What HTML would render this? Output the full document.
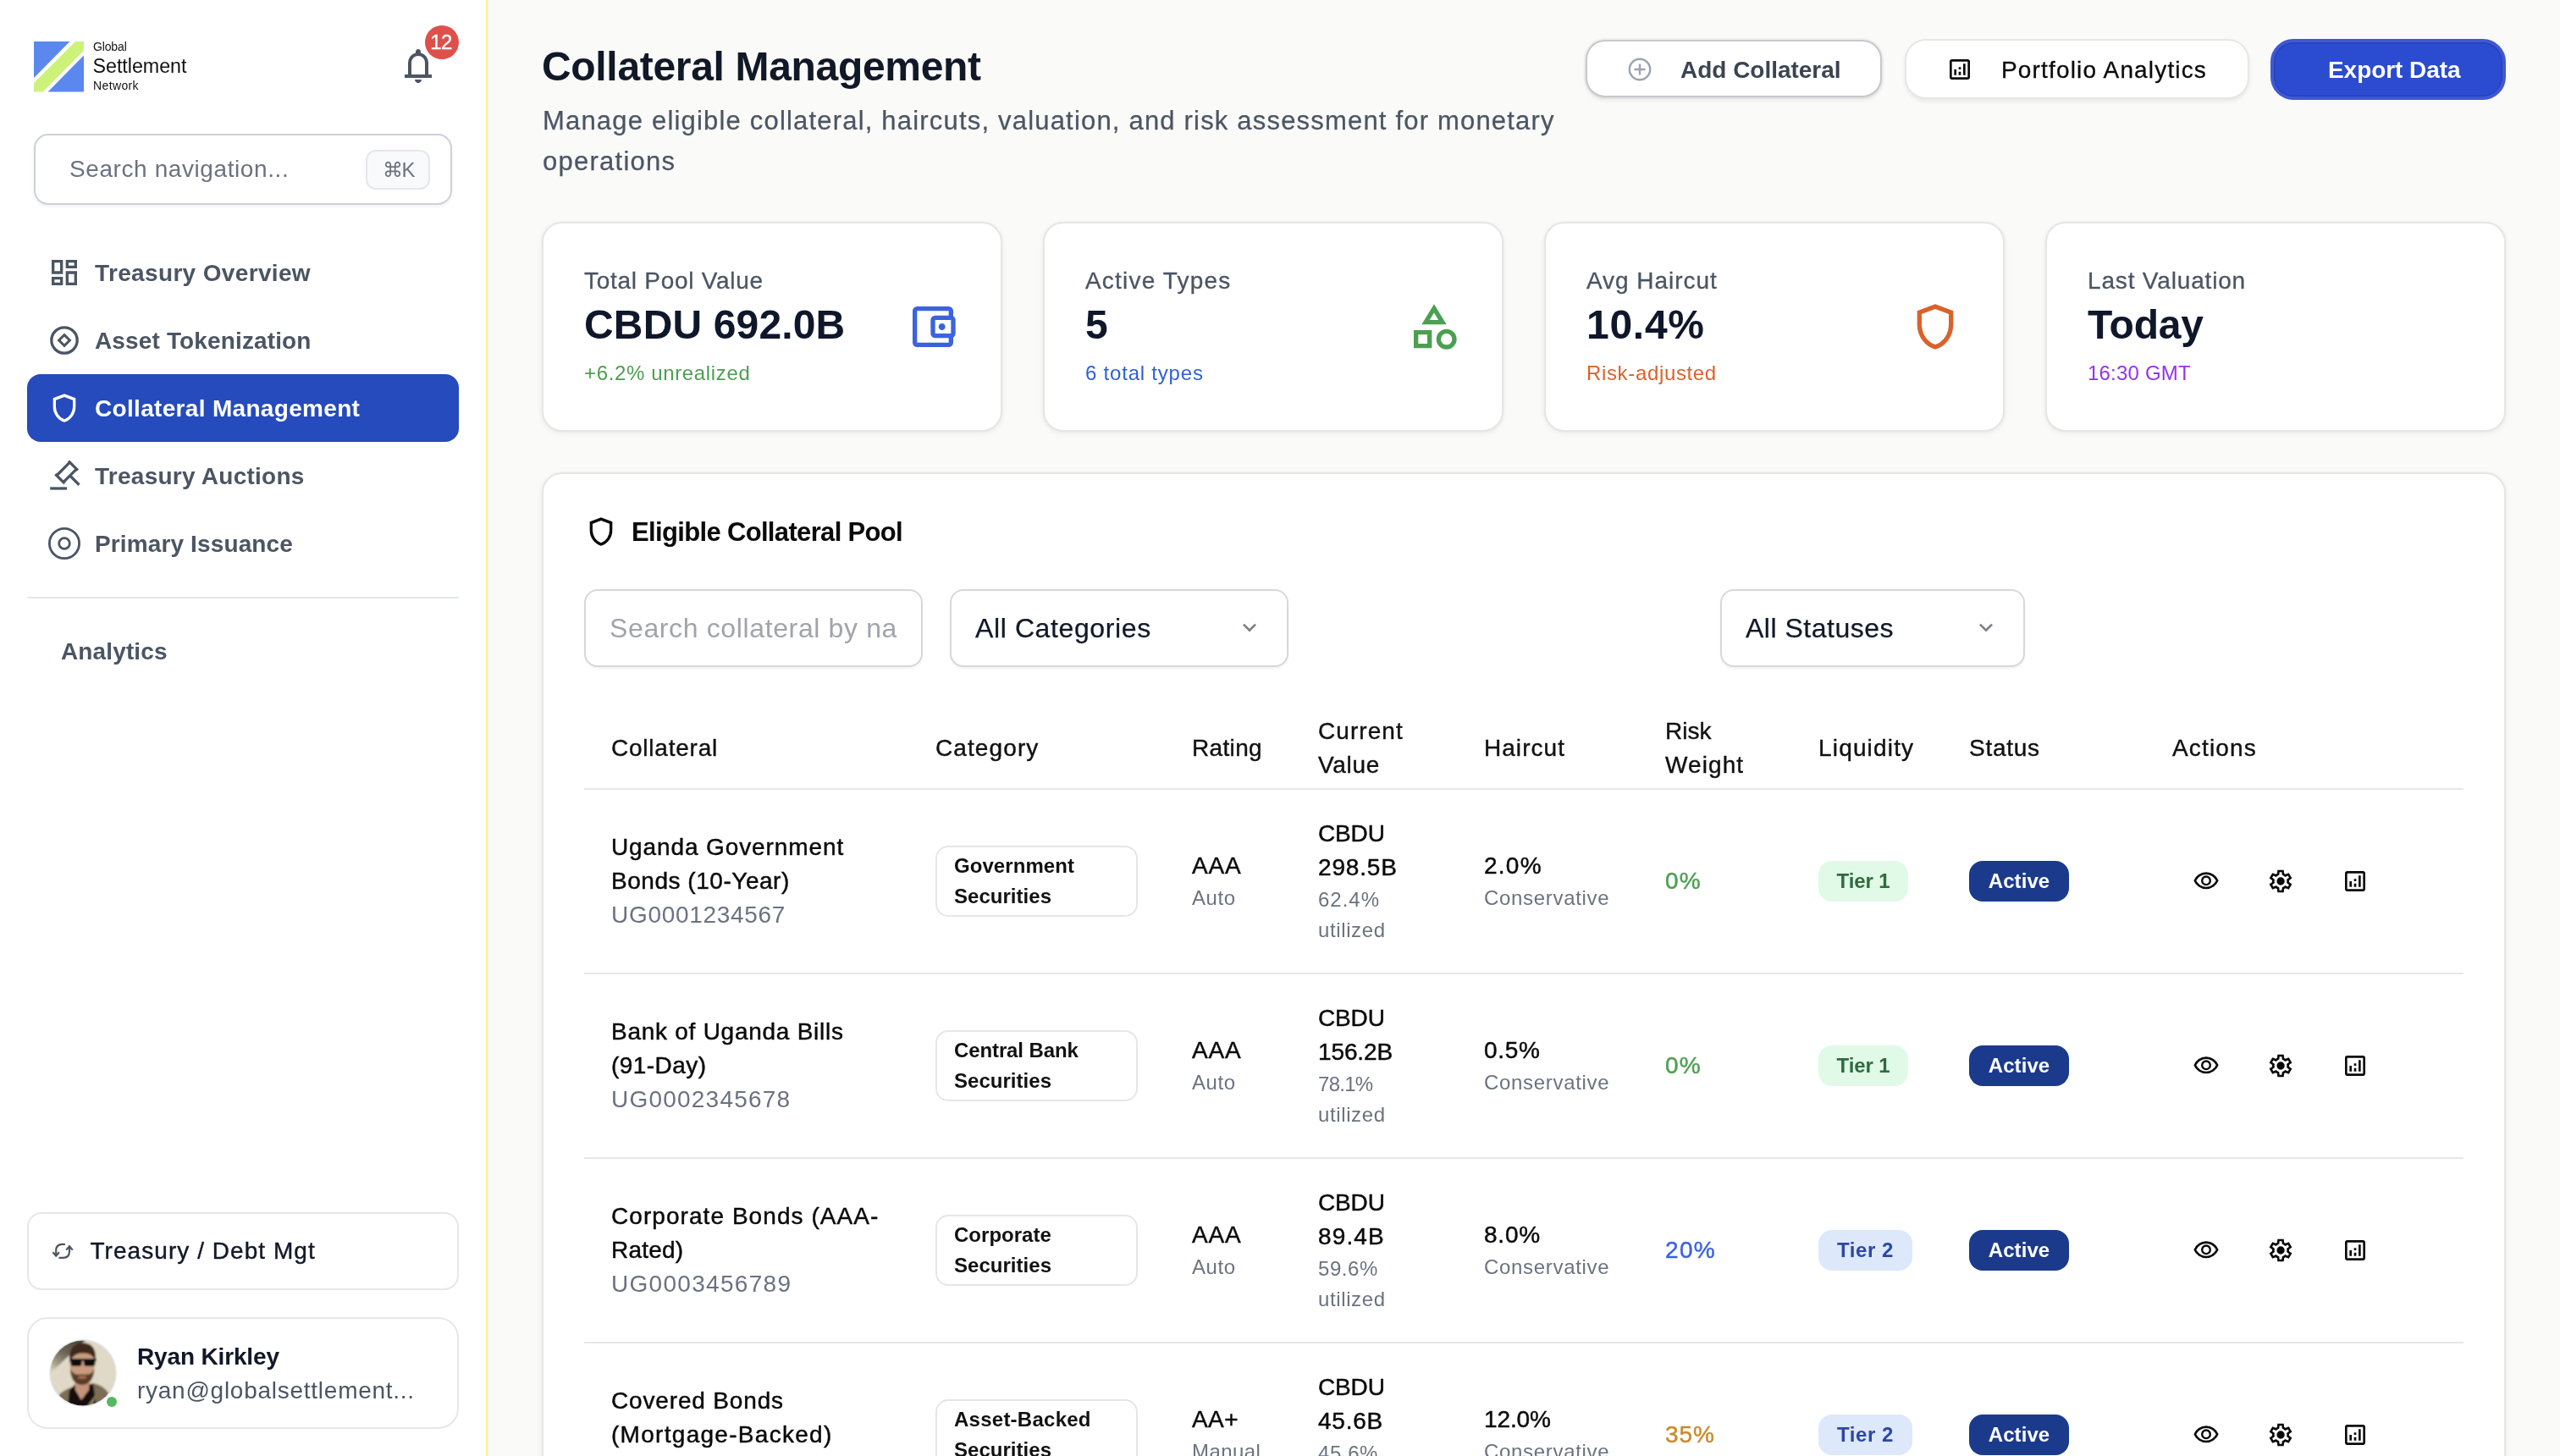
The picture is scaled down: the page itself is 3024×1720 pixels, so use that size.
<!DOCTYPE html>
<html lang="en">
<head>
<meta charset="utf-8">
<title>Collateral Management</title>
<style>
*{box-sizing:border-box;margin:0;padding:0}
html,body{width:3024px;height:1720px;overflow:hidden;background:#fafaf9}
@media (max-width:2000px){html{zoom:.5}}
body{font-family:"Liberation Sans",sans-serif;color:#111827;position:relative;will-change:transform}
.abs{position:absolute}
.t{position:absolute;white-space:nowrap;line-height:1}
svg{display:block}
/* ---------- sidebar ---------- */
#side{position:absolute;left:0;top:0;width:576px;height:1720px;background:#fff;border-right:2px solid #fdf08c}
.nav{position:absolute;left:32px;width:510px;height:80px;border-radius:16px;color:#4b5563;font-weight:700;font-size:28px}
.nav .ic{position:absolute;left:24px;top:20px;width:40px;height:40px}
.nav .lb{position:absolute;left:80px;top:1px;line-height:80px;white-space:nowrap;letter-spacing:.2px}
.nav.on{background:#254bbc;color:#fff}
.box{position:absolute;background:#fff;border:2px solid #e5e7eb;border-radius:24px}
/* ---------- main ---------- */
.card{position:absolute;top:262px;width:544px;height:248px;background:#fff;border:2px solid #e6e6e4;border-radius:24px;box-shadow:0 2px 6px rgba(0,0,0,.06),0 0 3px rgba(0,0,0,.04)}
.card .l{position:absolute;left:48px;top:50px;font-size:28px;line-height:36px;color:#4b5563;white-space:nowrap;-webkit-text-stroke:.3px #4b5563}
.card .v{position:absolute;left:48px;top:90px;font-size:48px;line-height:60px;font-weight:700;color:#0f172a;white-space:nowrap}
.card .s{position:absolute;left:48px;top:161px;font-size:24px;line-height:32px;white-space:nowrap}
.card .i{position:absolute;right:48px;top:90px;width:64px;height:64px}
#panel{position:absolute;left:640px;top:558px;width:2320px;height:1300px;background:#fff;border:2px solid #e6e6e4;border-radius:24px;box-shadow:0 2px 6px rgba(0,0,0,.06),0 0 3px rgba(0,0,0,.04)}
.inp{position:absolute;top:696px;height:92px;background:#fff;border:2px solid #d7d8dc;border-radius:16px;box-shadow:0 2px 3px rgba(0,0,0,.05);font-size:32px;line-height:88px;white-space:nowrap;overflow:hidden}
.th{position:absolute;font-size:28px;line-height:40px;color:#111;white-space:nowrap;-webkit-text-stroke:.4px #111}
.hr{position:absolute;left:690px;width:2220px;height:2px;background:#e6e7ea}
.row{position:absolute;left:690px;width:2220px;height:216px}
.c{position:absolute;top:0;height:216px;display:flex;flex-direction:column;justify-content:center;font-size:28px;line-height:40px;color:#0a0a0a;white-space:nowrap}
.c .m{color:#6b7280}
.c .md{-webkit-text-stroke:.45px #0a0a0a}
.c .sm{font-size:24px;line-height:36px;color:#6b7280}
.cat{display:block;width:239px;height:84px;border:2px solid #e5e6e8;border-radius:15px;padding:4px 20px;font-size:24px;line-height:36px;font-weight:700;color:#111}
.pill{display:inline-block;height:48px;line-height:48px;border-radius:16px;font-size:24px;font-weight:700;text-align:center}
.t1{background:#e0fae7;color:#2f6b3f;width:106px}
.t2{background:#dde8fb;color:#2b47a8;width:111px}
.act{background:#1b3a8c;color:#fff;width:118px}
.ai{position:absolute;top:92px;width:32px;height:32px}
</style>
</head>
<body>
<!-- SIDEBAR -->
<div id="side">
  <svg class="abs" style="left:40px;top:49px" width="59" height="60" viewBox="0 0 59 60">
    <polygon points="0,0 42.500,0 0,43" fill="#5b88ee"/>
    <polygon points="49,0 59,0 59,10.800 10.600,59.500 0,59.500 0,49" fill="#cdf27a"/>
    <polygon points="59,16.600 59,59.500 16.600,59.500" fill="#5b88ee"/>
  </svg>
  <div class="t" style="left:110px;top:48.4px;font-size:14px;color:#111"><span style="letter-spacing:-0.14px">Global</span></div>
  <div class="t" style="left:109.5px;top:67px;font-size:23.3px;color:#111"><span style="letter-spacing:-0.04px">Settlement</span></div>
  <div class="t" style="left:110px;top:94.3px;font-size:14px;color:#111"><span style="letter-spacing:0.38px">Network</span></div>
  <!-- bell -->
  <svg class="abs" style="left:470px;top:54px" width="48" height="48" viewBox="0 -960 960 960" fill="#4b5563"><path d="M160-200v-80h80v-280q0-83 50-147.500T420-792v-28q0-25 17.500-42.500T480-880q25 0 42.500 17.500T540-820v28q80 20 130 84.500T720-560v280h80v80H160ZM480-80q-33 0-56.500-23.500T400-160h160q0 33-23.500 56.500T480-80ZM320-280h320v-280q0-66-47-113t-113-47q-66 0-113 47t-47 113v280Z"/></svg>
  <div class="abs" style="left:502px;top:30px;width:40px;height:40px;border-radius:20px;background:#de504b;color:#fff;font-size:24px;line-height:40px;text-align:center;letter-spacing:-.5px;-webkit-text-stroke:.4px #fff;text-indent:-2px">12</div>
  <!-- search -->
  <div class="abs" style="left:40px;top:158px;width:494px;height:84px;border:2px solid #cdd1d9;border-radius:17px;background:#fff;box-shadow:0 2px 4px rgba(0,0,0,.06)"></div>
  <div class="t" id="snav" style="left:82px;top:184px;font-size:28px;line-height:32px;color:#6b7280;letter-spacing:.55px"><span style="letter-spacing:0.59px">Search navigation...</span></div>
  <div class="abs" style="left:432px;top:177px;width:76px;height:47px;border:2px solid #e5e7eb;border-radius:12px;background:#f9fafb"></div>
  <div class="t" style="left:452px;top:187px;font-size:24px;line-height:28px;color:#6b7280;letter-spacing:-1.500px;font-family:'Liberation Sans','DejaVu Sans',sans-serif">&#8984;K</div>
  <!-- nav -->
  <div class="nav" style="top:282px"><svg class="ic" viewBox="0 -960 960 960" fill="#4b5563"><path d="M520-600v-240h320v240H520ZM120-440v-400h320v400H120Zm400 320v-400h320v400H520Zm-400 0v-240h320v240H120Zm80-400h160v-240H200v240Zm400 320h160v-240H600v240Zm0-480h160v-80H600v80ZM200-200h160v-80H200v80Z"/></svg><span class="lb"><span style="letter-spacing:0.35px">Treasury Overview</span></span></div>
  <div class="nav" style="top:362px"><svg class="ic" viewBox="0 0 40 40" fill="none" stroke="#4b5563" stroke-width="3.3"><circle cx="20" cy="20" r="15.2"/><path d="M20 13.600 26.400 20 20 26.400 13.600 20Z" stroke-linejoin="miter" stroke-width="3"/></svg><span class="lb"><span style="letter-spacing:0.14px">Asset Tokenization</span></span></div>
  <div class="nav on" style="top:442px"><svg class="ic" viewBox="0 -960 960 960" fill="#fff"><path d="M480-80q-139-35-229.500-159.500T160-516v-244l320-120 320 120v244q0 152-90.500 276.500T480-80Zm0-84q104-33 172-132t68-220v-189l-240-90-240 90v189q0 121 68 220t172 132Z"/></svg><span class="lb"><span style="letter-spacing:0.32px">Collateral Management</span></span></div>
  <div class="nav" style="top:522px"><svg class="ic" viewBox="0 0 40 40" fill="none" stroke="#4b5563" stroke-width="3.3"><path d="M3.200 35H23"/><path d="M24.910 2.600 35.950 13.640M9.350 18.160 20.390 29.200M26.470 4.160 10.910 19.720M34.390 12.080 18.830 27.640M26.610 19.860 37.500 30.750"/></svg><span class="lb"><span style="letter-spacing:0.26px">Treasury Auctions</span></span></div>
  <div class="nav" style="top:602px"><svg class="ic" viewBox="0 0 40 40" fill="none" stroke="#4b5563" stroke-width="2.800"><circle cx="20" cy="20" r="17.600"/><circle cx="20" cy="20" r="6.300"/></svg><span class="lb"><span style="letter-spacing:0.13px">Primary Issuance</span></span></div>
  <div class="abs" style="left:32px;top:705px;width:510px;height:2px;background:#e5e7eb"></div>
  <div class="t" style="left:72px;top:754px;font-size:28px;line-height:32px;font-weight:700;color:#4b5563;letter-spacing:.2px"><span style="letter-spacing:0.13px">Analytics</span></div>
  <!-- role switch -->
  <div class="box" style="left:32px;top:1432px;width:510px;height:92px;border-radius:17px"></div>
  <svg class="abs" style="left:60px;top:1464px" width="28" height="28" viewBox="0 0 28 28" fill="none" stroke="#4b5563" stroke-width="2.200"><path d="M6.200 19.400V13.500Q6.200 5.900 13.500 5.900H16.900"/><path d="M2.400 15.200 6.200 19.600 10 15.200"/><path d="M22 8.400V14.300Q22 21.900 14.500 21.900H9.500"/><path d="M18.200 12.600 22 8.200 25.800 12.600"/></svg>
  <div class="t" id="role" style="left:106.500px;top:1460px;font-size:28px;line-height:36px;color:#111827;-webkit-text-stroke:.4px #111827;letter-spacing:.3px"><span style="letter-spacing:1.05px">Treasury / Debt Mgt</span></div>
  <!-- user -->
  <div class="box" style="left:32px;top:1556px;width:510px;height:132px"></div>
  <svg class="abs" style="left:58px;top:1582px" width="80" height="80" viewBox="0 0 80 80"><defs><clipPath id="av"><circle cx="40" cy="40" r="38.500"/></clipPath><filter id="avb" x="-10%" y="-10%" width="120%" height="120%"><feGaussianBlur stdDeviation=".9"/></filter><linearGradient id="avs" gradientUnits="userSpaceOnUse" x1="30" y1="0" x2="2" y2="36"><stop offset="0" stop-color="#4f483c"/><stop offset=".45" stop-color="#6f6758"/><stop offset=".8" stop-color="#a8a08c"/><stop offset="1" stop-color="#d6cebb"/></linearGradient></defs><circle cx="40" cy="40" r="40" fill="#e5e7eb"/><g clip-path="url(#av)"><g filter="url(#avb)"><rect x="-4" y="-4" width="88" height="88" fill="#e0d9c8"/><polygon points="0,0 44,0 6,36 0,42" fill="url(#avs)"/><path d="M6 80C8 66 14 62 26 57L52 52C64 55 72 60 76 80Z" fill="#7b6d55"/><path d="M22 80 24 60 30 54 52 53 56 80Z" fill="#14110f"/><path d="M30 46H48L47 60 38 72 31 60Z" fill="#c4937a"/><path d="M58 62 50 80H44Z" fill="#8b7d63"/><ellipse cx="39" cy="30" rx="14.500" ry="19" fill="#c99b7e"/><path d="M24.500 28C22 12 30 4 40 4.500 51 4 57 13 54.500 27 53 20 48 16 40 16.500 32 16 27 20 24.500 28Z" fill="#3d2b1f"/><path d="M25 34C25 48 31 54 39 54 47 54 53 48 53.500 34 51 42 46 42 39 41.500 32 42 28 42 25 34Z" fill="#5a3e2c"/><ellipse cx="39" cy="45" rx="5" ry="1.800" fill="#a8705c"/><rect x="25.500" y="23" width="13" height="9" rx="3.500" fill="#0c0c0c"/><rect x="41" y="23" width="13.500" height="9" rx="3.500" fill="#0c0c0c"/><rect x="24" y="23" width="32" height="2.600" fill="#0c0c0c"/></g></g></svg>
  <div class="abs" style="left:126px;top:1650px;width:12px;height:12px;border-radius:6px;background:#54b95e"></div>
  <div class="t" style="left:162px;top:1585px;font-size:28px;line-height:36px;font-weight:700;color:#111827;letter-spacing:.3px"><span style="letter-spacing:-0.15px">Ryan Kirkley</span></div>
  <div class="t" id="mail" style="left:162px;top:1625px;font-size:28px;line-height:36px;color:#4b5563;letter-spacing:.6px"><span style="letter-spacing:0.74px">ryan@globalsettlement...</span></div>
</div>


<!-- MAIN HEADER -->
<div class="t" id="h1" style="left:640px;top:51px;font-size:48px;line-height:56px;font-weight:700;color:#111827;letter-spacing:-.3px"><span style="letter-spacing:-0.32px">Collateral Management</span></div>
<div class="t" id="sub1" style="left:641px;top:123px;font-size:31px;line-height:40px;color:#4b5563;-webkit-text-stroke:.25px #4b5563;letter-spacing:.75px"><span style="letter-spacing:1.19px">Manage eligible collateral, haircuts, valuation, and risk assessment for monetary</span></div>
<div class="t" id="sub2" style="left:641px;top:171px;font-size:31px;line-height:40px;color:#4b5563;-webkit-text-stroke:.25px #4b5563;letter-spacing:.75px"><span style="letter-spacing:1.25px">operations</span></div>

<div class="abs" style="left:1873px;top:47px;width:350px;height:68px;border:2px solid #c6c8cc;border-radius:23px;background:#fff;box-shadow:0 0 0 2px rgba(0,0,0,.04),0 3px 5px rgba(0,0,0,.08)"></div>
<svg class="abs" style="left:1921px;top:66px" width="32" height="32" viewBox="0 0 32 32" fill="none" stroke="#9ca3af" stroke-width="2.400"><circle cx="16" cy="16" r="12.200"/><path d="M16 9.500V22.500M9.500 16H22.500"/></svg>
<div class="t" id="b1" style="left:1985px;top:64.5px;font-size:28px;line-height:36px;color:#3b4453;font-weight:700;letter-spacing:.2px"><span style="letter-spacing:-0.02px">Add Collateral</span></div>

<div class="abs" style="left:2250px;top:46px;width:407px;height:71px;border:2px solid #e7e7e7;border-radius:25px;background:#fff;box-shadow:0 3px 5px rgba(0,0,0,.07)"></div>
<svg class="abs" style="left:2299px;top:66px" width="32" height="32" viewBox="0 -960 960 960" fill="#0a0a0a"><path d="M280-280h80v-200h-80v200Zm320 0h80v-400h-80v400Zm-160 0h80v-120h-80v120Zm0-200h80v-80h-80v80ZM200-120q-33 0-56.500-23.500T120-200v-560q0-33 23.500-56.500T200-840h560q33 0 56.500 23.500T840-760v560q0 33-23.500 56.500T760-120H200Zm0-80h560v-560H200v560Z"/></svg>
<div class="t" id="b2" style="left:2364px;top:64.5px;font-size:28px;line-height:36px;color:#0a0a0a;-webkit-text-stroke:.3px #0a0a0a;letter-spacing:.7px"><span style="letter-spacing:1.16px">Portfolio Analytics</span></div>

<div class="abs" style="left:2682px;top:46px;width:278px;height:72px;border-radius:27px;background:#2b4bd0;border:4px solid #3f58d4;box-shadow:inset 0 0 0 1.500px #2741b8"></div>
<div class="t" id="b3" style="left:2750px;top:65px;font-size:28px;line-height:36px;color:#fff;font-weight:700;letter-spacing:.35px"><span style="letter-spacing:-0.06px">Export Data</span></div>

<!-- STAT CARDS -->
<div class="card" style="left:640px"><div class="l"><span style="letter-spacing:0.72px">Total Pool Value</span></div><div class="v" id="v1"><span style="letter-spacing:0.15px">CBDU 692.0B</span></div><div class="s" style="color:#4c9f50"><span style="letter-spacing:0.64px">+6.2% unrealized</span></div>
  <svg class="i" viewBox="0 -960 960 960" fill="#3b63dd"><path d="M200-120q-33 0-56.500-23.500T120-200v-560q0-33 23.500-56.500T200-840h560q33 0 56.500 23.500T840-760v100h-80v-100H200v560h560v-100h80v100q0 33-23.500 56.500T760-120H200Zm320-160q-33 0-56.500-23.500T440-360v-240q0-33 23.500-56.500T520-680h280q33 0 56.500 23.500T880-600v240q0 33-23.500 56.500T800-280H520Zm280-80v-240H520v240h280Zm-160-60q25 0 42.500-17.500T700-480q0-25-17.500-42.500T640-540q-25 0-42.500 17.500T580-480q0 25 17.500 42.500T640-420Z"/></svg></div>
<div class="card" style="left:1232px"><div class="l"><span style="letter-spacing:1.19px">Active Types</span></div><div class="v"><span style="letter-spacing:1.00px">5</span></div><div class="s" style="color:#2f5fd9"><span style="letter-spacing:0.79px">6 total types</span></div>
  <svg class="i" viewBox="0 -960 960 960" fill="#4c9f50"><path d="m260-520 220-360 220 360H260ZM700-80q-75 0-127.500-52.500T520-260q0-75 52.500-127.500T700-440q75 0 127.500 52.500T880-260q0 75-52.500 127.500T700-80Zm-580-20v-320h320v320H120Zm580-60q42 0 71-29t29-71q0-42-29-71t-71-29q-42 0-71 29t-29 71q0 42 29 71t71 29Zm-500-20h160v-160H200v160Zm202-420h156l-78-126-78 126Z"/></svg></div>
<div class="card" style="left:1824px"><div class="l"><span style="letter-spacing:0.95px">Avg Haircut</span></div><div class="v"><span style="letter-spacing:0.72px">10.4%</span></div><div class="s" style="color:#d9622b"><span style="letter-spacing:0.65px">Risk-adjusted</span></div>
  <svg class="i" viewBox="0 -960 960 960" fill="#d9622b"><path d="M480-80q-139-35-229.500-159.500T160-516v-244l320-120 320 120v244q0 152-90.500 276.500T480-80Zm0-84q104-33 172-132t68-220v-189l-240-90-240 90v189q0 121 68 220t172 132Z"/></svg></div>
<div class="card" style="left:2416px"><div class="l"><span style="letter-spacing:0.83px">Last Valuation</span></div><div class="v"><span style="letter-spacing:-0.18px">Today</span></div><div class="s" style="color:#9333ea"><span style="letter-spacing:0.21px">16:30 GMT</span></div></div>

<!-- PANEL -->
<div id="panel"></div>
<svg class="abs" style="left:690px;top:608px" width="40" height="40" viewBox="0 -960 960 960" fill="#0a0a0a"><path d="M480-80q-139-35-229.500-159.500T160-516v-244l320-120 320 120v244q0 152-90.500 276.500T480-80Zm0-84q104-33 172-132t68-220v-189l-240-90-240 90v189q0 121 68 220t172 132Z"/></svg>
<div class="t" id="pt" style="left:746px;top:607px;font-size:31px;line-height:44px;font-weight:700;color:#0a0a0a;letter-spacing:-.6px"><span style="letter-spacing:-0.66px">Eligible Collateral Pool</span></div>
<div class="inp" style="left:690px;width:400px;padding-left:28px;color:#a2a3ab"><span id="i1" style="letter-spacing:.9px"><span style="letter-spacing:0.63px">Search collateral by na</span></span></div>
<div class="inp" style="left:1122px;width:400px;padding-left:28px;color:#111827;-webkit-text-stroke:.25px #111827"><span id="i2" style="letter-spacing:.7px"><span style="letter-spacing:0.61px">All Categories</span></span></div>
<svg class="abs" style="left:1460px;top:726px" width="32" height="32" viewBox="0 -960 960 960" fill="#7d8088"><path d="M480-344 240-584l56-56 184 184 184-184 56 56-240 240Z"/></svg>
<div class="inp" style="left:2032px;width:360px;padding-left:28px;color:#111827;-webkit-text-stroke:.25px #111827"><span id="i3" style="letter-spacing:.7px"><span style="letter-spacing:0.50px">All Statuses</span></span></div>
<svg class="abs" style="left:2330px;top:726px" width="32" height="32" viewBox="0 -960 960 960" fill="#7d8088"><path d="M480-344 240-584l56-56 184 184 184-184 56 56-240 240Z"/></svg>
<!-- TABLE -->
<svg width="0" height="0" style="position:absolute"><defs><path id="p-eye" d="M480-320q75 0 127.500-52.500T660-500q0-75-52.500-127.500T480-680q-75 0-127.500 52.500T300-500q0 75 52.500 127.500T480-320Zm0-72q-45 0-76.500-31.500T372-500q0-45 31.500-76.500T480-608q45 0 76.500 31.500T588-500q0 45-31.500 76.500T480-392Zm0 192q-146 0-266-81.500T40-500q54-137 174-218.500T480-800q146 0 266 81.500T920-500q-54 137-174 218.500T480-200Zm0-80q113 0 207.500-59.500T832-500q-50-101-144.500-160.500T480-720q-113 0-207.500 59.500T128-500q50 101 144.500 160.500T480-280Z"/><path id="p-gear" d="m370-80-16-128q-13-5-24.500-12T307-235l-119 50L78-375l103-78q-1-7-1-13.500v-27q0-6.500 1-13.500L78-585l110-190 119 50q11-8 23-15t24-12l16-128h220l16 128q13 5 24.500 12t22.500 15l119-50 110 190-103 78q1 7 1 13.500v27q0 6.500-2 13.500l103 78-110 190-118-50q-11 8-23 15t-24 12L590-80H370Zm70-80h79l14-106q31-8 57.500-23.500T639-327l99 41 39-68-86-65q5-14 7-29.500t2-31.500q0-16-2-31.500t-7-29.500l86-65-39-68-99 42q-22-23-48.500-38.500T533-694l-13-106h-79l-14 106q-31 8-57.500 23.500T321-633l-99-41-39 68 86 64q-5 15-7 30t-2 32q0 16 2 31t7 30l-86 65 39 68 99-42q22 23 48.500 38.500T427-266l13 106Zm42-180q58 0 99-41t41-99q0-58-41-99t-99-41q-59 0-99.500 41T342-480q0 58 40.500 99t99.500 41Z"/><path id="p-an" d="M280-280h80v-200h-80v200Zm320 0h80v-400h-80v400Zm-160 0h80v-120h-80v120Zm0-200h80v-80h-80v80ZM200-120q-33 0-56.500-23.500T120-200v-560q0-33 23.500-56.500T200-840h560q33 0 56.500 23.500T840-760v560q0 33-23.500 56.500T760-120H200Zm0-80h560v-560H200v560Z"/></defs></svg>

<div class="th" style="left:722px;top:864px"><span style="letter-spacing:0.77px">Collateral</span></div>
<div class="th" style="left:1105px;top:864px"><span style="letter-spacing:1.10px">Category</span></div>
<div class="th" style="left:1408px;top:864px"><span style="letter-spacing:0.34px">Rating</span></div>
<div class="th" style="left:1557px;top:844px"><span style="letter-spacing:1.06px">Current</span><br><span style="letter-spacing:0.69px">Value</span></div>
<div class="th" style="left:1753px;top:864px"><span style="letter-spacing:1.04px">Haircut</span></div>
<div class="th" style="left:1967px;top:844px"><span style="letter-spacing:0.01px">Risk</span><br><span style="letter-spacing:1.09px">Weight</span></div>
<div class="th" style="left:2148px;top:864px"><span style="letter-spacing:1.17px">Liquidity</span></div>
<div class="th" style="left:2326px;top:864px"><span style="letter-spacing:0.72px">Status</span></div>
<div class="th" style="left:2566px;top:864px"><span style="letter-spacing:1.17px">Actions</span></div>
<div class="hr" style="top:931px"></div>
<div class="row" style="top:933px">
 <div class="c" style="left:32px"><span class="md n1"><span style="letter-spacing:0.89px">Uganda Government</span></span><span class="md n2"><span style="letter-spacing:0.53px">Bonds (10-Year)</span></span><span class="m cd"><span style="letter-spacing:0.69px">UG0001234567</span></span></div>
 <div class="c" style="left:415px"><span class="cat"><span class="k1"><span style="letter-spacing:0.06px">Government</span></span><br><span class="k2"><span style="letter-spacing:0.03px">Securities</span></span></span></div>
 <div class="c" style="left:718px"><span class="md"><span style="letter-spacing:0.86px">AAA</span></span><span class="sm"><span style="letter-spacing:0.56px">Auto</span></span></div>
 <div class="c" style="left:867px"><span class="md"><span style="letter-spacing:-0.14px">CBDU</span></span><span class="md"><span style="letter-spacing:0.84px">298.5B</span></span><span class="sm"><span style="letter-spacing:0.99px">62.4%</span></span><span class="sm"><span style="letter-spacing:0.62px">utilized</span></span></div>
 <div class="c" style="left:1063px"><span class="md"><span style="letter-spacing:1.24px">2.0%</span></span><span class="sm"><span style="letter-spacing:0.69px">Conservative</span></span></div>
 <div class="c" style="left:1277px"><span class="md" style="color:#4c9f50;-webkit-text-stroke-color:#4c9f50"><span style="letter-spacing:1.27px">0%</span></span></div>
 <div class="c" style="left:1458px"><span class="pill t1"><span style="letter-spacing:-0.10px">Tier 1</span></span></div>
 <div class="c" style="left:1636px"><span class="pill act"><span style="letter-spacing:0.08px">Active</span></span></div>
 <svg class="ai" style="left:1900px" viewBox="0 -960 960 960" fill="#0a0a0a"><use href="#p-eye"/></svg>
 <svg class="ai" style="left:1988px" viewBox="0 -960 960 960" fill="#0a0a0a"><use href="#p-gear"/></svg>
 <svg class="ai" style="left:2076px" viewBox="0 -960 960 960" fill="#0a0a0a"><use href="#p-an"/></svg>
</div>
<div class="hr" style="top:1149px"></div>
<div class="row" style="top:1151px">
 <div class="c" style="left:32px"><span class="md n1"><span style="letter-spacing:0.74px">Bank of Uganda Bills</span></span><span class="md n2"><span style="letter-spacing:0.45px">(91-Day)</span></span><span class="m cd"><span style="letter-spacing:1.22px">UG0002345678</span></span></div>
 <div class="c" style="left:415px"><span class="cat"><span class="k1"><span style="letter-spacing:-0.11px">Central Bank</span></span><br><span class="k2"><span style="letter-spacing:0.03px">Securities</span></span></span></div>
 <div class="c" style="left:718px"><span class="md"><span style="letter-spacing:0.86px">AAA</span></span><span class="sm"><span style="letter-spacing:0.56px">Auto</span></span></div>
 <div class="c" style="left:867px"><span class="md"><span style="letter-spacing:-0.14px">CBDU</span></span><span class="md"><span style="letter-spacing:-0.12px">156.2B</span></span><span class="sm"><span style="letter-spacing:-0.71px">78.1%</span></span><span class="sm"><span style="letter-spacing:0.62px">utilized</span></span></div>
 <div class="c" style="left:1063px"><span class="md"><span style="letter-spacing:0.69px">0.5%</span></span><span class="sm"><span style="letter-spacing:0.69px">Conservative</span></span></div>
 <div class="c" style="left:1277px"><span class="md" style="color:#4c9f50;-webkit-text-stroke-color:#4c9f50"><span style="letter-spacing:1.27px">0%</span></span></div>
 <div class="c" style="left:1458px"><span class="pill t1"><span style="letter-spacing:-0.10px">Tier 1</span></span></div>
 <div class="c" style="left:1636px"><span class="pill act"><span style="letter-spacing:0.08px">Active</span></span></div>
 <svg class="ai" style="left:1900px" viewBox="0 -960 960 960" fill="#0a0a0a"><use href="#p-eye"/></svg>
 <svg class="ai" style="left:1988px" viewBox="0 -960 960 960" fill="#0a0a0a"><use href="#p-gear"/></svg>
 <svg class="ai" style="left:2076px" viewBox="0 -960 960 960" fill="#0a0a0a"><use href="#p-an"/></svg>
</div>
<div class="hr" style="top:1367px"></div>
<div class="row" style="top:1369px">
 <div class="c" style="left:32px"><span class="md n1"><span style="letter-spacing:1.06px">Corporate Bonds (AAA-</span></span><span class="md n2"><span style="letter-spacing:0.21px">Rated)</span></span><span class="m cd"><span style="letter-spacing:1.30px">UG0003456789</span></span></div>
 <div class="c" style="left:415px"><span class="cat"><span class="k1"><span style="letter-spacing:0.02px">Corporate</span></span><br><span class="k2"><span style="letter-spacing:0.03px">Securities</span></span></span></div>
 <div class="c" style="left:718px"><span class="md"><span style="letter-spacing:0.86px">AAA</span></span><span class="sm"><span style="letter-spacing:0.56px">Auto</span></span></div>
 <div class="c" style="left:867px"><span class="md"><span style="letter-spacing:-0.14px">CBDU</span></span><span class="md"><span style="letter-spacing:1.13px">89.4B</span></span><span class="sm"><span style="letter-spacing:0.55px">59.6%</span></span><span class="sm"><span style="letter-spacing:0.62px">utilized</span></span></div>
 <div class="c" style="left:1063px"><span class="md"><span style="letter-spacing:0.79px">8.0%</span></span><span class="sm"><span style="letter-spacing:0.69px">Conservative</span></span></div>
 <div class="c" style="left:1277px"><span class="md" style="color:#3b63dd;-webkit-text-stroke-color:#3b63dd"><span style="letter-spacing:1.32px">20%</span></span></div>
 <div class="c" style="left:1458px"><span class="pill t2"><span style="letter-spacing:0.57px">Tier 2</span></span></div>
 <div class="c" style="left:1636px"><span class="pill act"><span style="letter-spacing:0.08px">Active</span></span></div>
 <svg class="ai" style="left:1900px" viewBox="0 -960 960 960" fill="#0a0a0a"><use href="#p-eye"/></svg>
 <svg class="ai" style="left:1988px" viewBox="0 -960 960 960" fill="#0a0a0a"><use href="#p-gear"/></svg>
 <svg class="ai" style="left:2076px" viewBox="0 -960 960 960" fill="#0a0a0a"><use href="#p-an"/></svg>
</div>
<div class="hr" style="top:1585px"></div>
<div class="row" style="top:1587px">
 <div class="c" style="left:32px"><span class="md n1"><span style="letter-spacing:0.84px">Covered Bonds</span></span><span class="md n2"><span style="letter-spacing:1.29px">(Mortgage-Backed)</span></span><span class="m cd"><span style="letter-spacing:1.27px">UG0004567890</span></span></div>
 <div class="c" style="left:415px"><span class="cat"><span class="k1"><span style="letter-spacing:0.25px">Asset-Backed</span></span><br><span class="k2"><span style="letter-spacing:0.03px">Securities</span></span></span></div>
 <div class="c" style="left:718px"><span class="md"><span style="letter-spacing:0.40px">AA+</span></span><span class="sm"><span style="letter-spacing:0.40px">Manual</span></span></div>
 <div class="c" style="left:867px"><span class="md"><span style="letter-spacing:-0.14px">CBDU</span></span><span class="md"><span style="letter-spacing:0.75px">45.6B</span></span><span class="sm"><span style="letter-spacing:0.59px">45.6%</span></span><span class="sm"><span style="letter-spacing:0.62px">utilized</span></span></div>
 <div class="c" style="left:1063px"><span class="md"><span style="letter-spacing:-0.12px">12.0%</span></span><span class="sm"><span style="letter-spacing:0.69px">Conservative</span></span></div>
 <div class="c" style="left:1277px"><span class="md" style="color:#c98a2b;-webkit-text-stroke-color:#c98a2b"><span style="letter-spacing:0.98px">35%</span></span></div>
 <div class="c" style="left:1458px"><span class="pill t2"><span style="letter-spacing:0.57px">Tier 2</span></span></div>
 <div class="c" style="left:1636px"><span class="pill act"><span style="letter-spacing:0.08px">Active</span></span></div>
 <svg class="ai" style="left:1900px" viewBox="0 -960 960 960" fill="#0a0a0a"><use href="#p-eye"/></svg>
 <svg class="ai" style="left:1988px" viewBox="0 -960 960 960" fill="#0a0a0a"><use href="#p-gear"/></svg>
 <svg class="ai" style="left:2076px" viewBox="0 -960 960 960" fill="#0a0a0a"><use href="#p-an"/></svg>
</div>
<div class="hr" style="top:1803px"></div>
</body>
</html>
